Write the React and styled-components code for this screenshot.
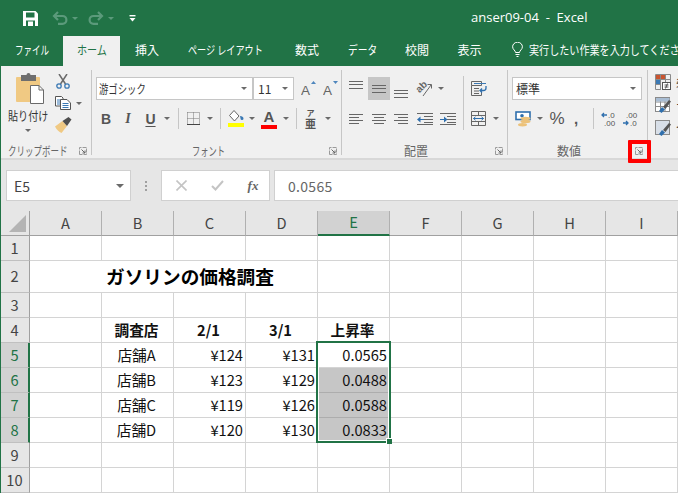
import React from 'react';
import styled, { createGlobalStyle } from 'styled-components';

const GREEN = '#217346';
const JP = `"Noto Sans CJK JP", "Noto Sans", sans-serif`;

const GlobalStyle = createGlobalStyle`
	html, body {
		margin: 0;
		padding: 0;
		background: #fff;
	}
	body {
		font-family: ${JP};
		overflow: hidden;
	}
`;

const Window = styled.div`
	width: 677px;
	height: 493px;
	overflow: hidden;
	border-left: 1px solid ${GREEN};
	position: relative;
`;

/* title bar */
const TitleBar = styled.header`
	height: 36px;
	background: ${GREEN};
	display: flex;
	align-items: center;
	padding-left: 22px;
	color: #fff;
`;

const Qat = styled.span`
	display: flex;
	align-items: center;
	margin-left: ${p => p.$ml || 0}px;
`;

const Title = styled.div`
	margin-left: 335px;
	font: 13px "Open Sans", sans-serif;
	white-space: pre;
	margin-top: -2px;
`;

/* tabs */
const TabBar = styled.nav`
	height: 30px;
	background: ${GREEN};
	display: flex;
	white-space: nowrap;
	overflow: hidden;
`;

const Tab = styled.div`
	width: ${p => p.$w}px;
	flex: none;
	display: flex;
	align-items: center;
	justify-content: center;
	font-size: 12px;
	padding-bottom: 3px;
	box-sizing: border-box;
	color: ${p => (p.$active ? GREEN : '#fff')};
	background: ${p => (p.$active ? '#f0f0f0' : 'transparent')};
`;

const TellMe = styled.div`
	margin-left: 16px;
	display: flex;
	align-items: center;
	color: #fff;
	font-size: 12px;
	padding-bottom: 3px;
	gap: 6px;
`;

/* squeezes Japanese text down to the narrow kana of the original UI font */
const Narrow = styled.span`
	display: inline-block;
	width: ${p => p.$w}px;
	white-space: nowrap;
	transform-origin: left center;
	transform: scaleX(${p => p.$s});
`;

/* ribbon */
const Ribbon = styled.section`
	height: 92px;
	background: #f0f0f0;
	border-bottom: 2px solid #d8d8d8;
	display: flex;
	position: relative;
	z-index: 3;
`;

const Group = styled.div`
	width: ${p => p.$w}px;
	height: 85px;
	margin-top: 4px;
	flex: none;
	box-sizing: border-box;
	border-right: ${p => (p.$last ? 'none' : '1px solid #c6c6c6')};
	display: flex;
	flex-direction: column;
`;

const GroupBody = styled.div`
	flex: 1;
	min-height: 0;
	display: flex;
`;

const GroupFoot = styled.div`
	height: 16px;
	margin-bottom: -4px;
	display: flex;
	align-items: center;
	color: #666;
`;

const GroupLabel = styled.div`
	flex: 1;
	text-align: center;
	font-size: 12px;
	line-height: 16px;
	white-space: nowrap;
`;

const Launcher = styled.div`
	width: 17px;
	height: 16px;
	flex: none;
	display: flex;
	align-items: center;
	justify-content: center;
	position: relative;
`;

const RedMark = styled.div`
	position: absolute;
	left: -2px;
	right: -4px;
	top: -3px;
	bottom: -4px;
	border: 4px solid #f00;
	border-radius: 1px;
`;

const Column = styled.div`
	display: flex;
	flex-direction: column;
	align-items: ${p => (p.$center ? 'center' : 'stretch')};
	padding-top: ${p => p.$top || 0}px;
	padding-left: ${p => p.$left || 0}px;
	width: ${p => (p.$w ? `${p.$w}px` : 'auto')};
	box-sizing: border-box;
	flex: none;
`;

const ToolRow = styled.div`
	display: flex;
	align-items: center;
	height: ${p => p.$h || 23}px;
	margin-top: ${p => p.$mt || 0}px;
	padding-left: ${p => p.$left || 0}px;
`;

const Tool = styled.div`
	width: ${p => p.$w}px;
	height: ${p => p.$h || 23}px;
	margin-left: ${p => p.$ml || 0}px;
	flex: none;
	display: flex;
	flex-direction: column;
	align-items: center;
	justify-content: center;
	color: #555;
	background: ${p => (p.$on ? '#c6c6c6' : 'transparent')};
`;

const Caret = styled.i`
	width: 0;
	height: 0;
	flex: none;
	margin-left: ${p => p.$ml ?? 1}px;
	margin-right: ${p => p.$mr ?? 1}px;
	margin-top: ${p => p.$mt || 0}px;
	border-left: ${p => p.$size || 3}px solid transparent;
	border-right: ${p => p.$size || 3}px solid transparent;
	border-top: ${p => p.$size || 3}px solid ${p => p.$c || '#6a6a6a'};
`;

const Rule = styled.div`
	width: 1px;
	height: ${p => p.$h || 21}px;
	margin-left: ${p => p.$ml || 0}px;
	margin-top: ${p => p.$mt || 0}px;
	background: #c6c6c6;
	flex: none;
`;

const Combo = styled.div`
	width: ${p => p.$w}px;
	height: 23px;
	box-sizing: border-box;
	background: #fff;
	border: 1px solid #c6c6c6;
	display: flex;
	align-items: center;
	justify-content: space-between;
	padding: 0 4px 0 2px;
	font-size: 12px;
	color: #333;
	flex: none;
`;

const ComboText = styled.span`
	padding-left: ${p => p.$pad || 0}px;
`;

const ToolGlyph = styled.span`
	font-family: ${p => (p.$serif ? '"Liberation Serif", serif' : '"Liberation Sans", sans-serif')};
	font-weight: ${p => (p.$light ? 400 : 700)};
	font-style: ${p => (p.$italic ? 'italic' : 'normal')};
	font-size: ${p => p.$size || 14}px;
	line-height: 1;
	color: ${p => p.$c || '#555'};
	text-decoration: ${p => (p.$under ? 'underline' : 'none')};
	text-underline-offset: 2px;
`;

const Swatch = styled.div`
	width: 16px;
	height: 4px;
	background: ${p => p.$c};
	margin-top: 1px;
`;

const Ruby = styled.span`
	font-size: 8px;
	line-height: 9px;
	font-weight: 700;
	color: #555;
`;

const RubyBase = styled.span`
	font-size: 11px;
	line-height: 13px;
	font-weight: 700;
	color: #555;
`;

const PasteLabel = styled.div`
	font-size: 12px;
	color: #333;
	line-height: 16px;
	margin-top: 4px;
	white-space: nowrap;
`;

const StyleRow = styled.div`
	display: flex;
	align-items: center;
	gap: 5px;
	height: 23px;
	white-space: nowrap;
	font-size: 12px;
	color: #333;
`;

/* formula bar */
const FormulaBar = styled.section`
	height: 51px;
	box-sizing: border-box;
	background: #e6e6e6;
	display: flex;
	padding: 10px 0 10px 5px;
`;

const FieldBox = styled.div`
	width: ${p => p.$w}px;
	margin-left: ${p => p.$ml || 0}px;
	flex: none;
	box-sizing: border-box;
	background: #fff;
	border: 1px solid #d0d0d0;
	display: flex;
	align-items: center;
	font-size: 14px;
	color: #555;
`;

const NameText = styled.span`
	flex: 1;
	padding-left: 7px;
	color: #444;
`;

const Dots = styled.div`
	width: 30px;
	flex: none;
	display: flex;
	flex-direction: column;
	align-items: center;
	justify-content: center;
	gap: 2px;
	i {
		width: 2px;
		height: 2px;
		background: #a0a0a0;
	}
`;

const FxButton = styled.span`
	width: ${p => p.$w}px;
	flex: none;
	display: flex;
	justify-content: center;
	font: italic 700 13px "Liberation Serif", serif;
	color: #666;
`;

const FormulaText = styled.span`
	padding-left: 13px;
	letter-spacing: 0.3px;
	color: #666;
`;

/* sheet */
const Sheet = styled.div`
	display: grid;
	position: relative;
	grid-template-columns: 29px repeat(9, 72px);
	grid-template-rows: 25px 25px 32px repeat(8, 25px);
	font-size: 14.67px;
	color: #111;
`;

const Corner = styled.div`
	background: #e6e6e6;
	border-right: 1px solid #a0a0a0;
	border-bottom: 1px solid #a0a0a0;
	display: flex;
	align-items: flex-end;
	justify-content: flex-end;
	padding: 0 3px 3px 0;
	box-sizing: border-box;
	&::after {
		content: '';
		width: 17px;
		height: 17px;
		background: #b4b4b4;
		clip-path: polygon(100% 0, 100% 100%, 0 100%);
	}
`;

const ColHead = styled.div`
	background: ${p => (p.$sel ? '#d2d2d2' : '#e6e6e6')};
	color: ${p => (p.$sel ? GREEN : '#444')};
	border-right: 1px solid #b0b0b0;
	border-bottom: ${p => (p.$sel ? `2px solid ${GREEN}` : '1px solid #a0a0a0')};
	box-sizing: border-box;
	display: flex;
	align-items: center;
	justify-content: center;
	padding-bottom: 2px;
`;

const RowHead = styled.div`
	background: ${p => (p.$sel ? '#d2d2d2' : '#e6e6e6')};
	color: ${p => (p.$sel ? GREEN : '#444')};
	border-right: ${p => (p.$sel ? `2px solid ${GREEN}` : '1px solid #a0a0a0')};
	border-bottom: 1px solid #c0c0c0;
	box-sizing: border-box;
	display: flex;
	align-items: center;
	justify-content: center;
	padding: 0 ${p => (p.$sel ? 0 : 1)}px 2px 0;
`;

const Cell = styled.div`
	box-sizing: border-box;
	border-right: 1px solid ${p => (p.$shade ? '#fff' : '#d4d4d4')};
	border-bottom: 1px solid ${p => (p.$shade ? '#adadad' : '#d4d4d4')};
	background: ${p => (p.$shade ? '#c6c6c6' : '#fff')};
	display: flex;
	align-items: center;
	justify-content: ${p => p.$align || 'flex-start'};
	padding: 0 2px 2px 0;
	font-weight: ${p => (p.$bold ? 700 : 400)};
	white-space: nowrap;
`;

const MergedTitle = styled(Cell)`
	grid-column: 2 / span 4;
	padding-left: 76px;
	font-size: 18.67px;
	font-weight: 700;
	color: #000;
`;

const Selection = styled.div`
	position: absolute;
	grid-column: 6 / span 1;
	grid-row: 6 / span 4;
	top: -2px;
	left: -2px;
	right: -1px;
	bottom: 0;
	border: 2px solid ${GREEN};
	box-shadow: inset 0 0 0 1px #fff;
	z-index: 2;
`;

const FillHandle = styled.div`
	position: absolute;
	right: -3px;
	bottom: -3px;
	width: 5px;
	height: 5px;
	background: ${GREEN};
	border: 1px solid #fff;
	border-right: 0;
	border-bottom: 0;
`;

/* icons */
const Svg = ({ w, h, children }) => (
	<svg width={w} height={h} viewBox={`0 0 ${w} ${h}`} fill="none" style={{ display: 'block', flex: 'none' }}>
		{children}
	</svg>
);

const LaunchIcon = () => (
	<Svg w={8} h={8}>
		<path d="M0.5 7.5V0.5H7.5V7.5Z" stroke="#9a9a9a" strokeDasharray="4 1" />
		<path d="M2.5 2.5L6 6M6 3.5V6H3.5" stroke="#666" />
	</Svg>
);

const SaveIcon = () => (
	<Svg w={15} h={15}>
		<path d="M0 0H12.5L15 2.5V15H0Z" fill="#fff" />
		<rect x="3" y="1.5" width="8.5" height="5" fill={GREEN} />
		<rect x="3" y="9.5" width="9" height="5.5" fill={GREEN} />
		<rect x="5" y="10.5" width="5" height="4.5" fill="#fff" />
	</Svg>
);

const UndoIcon = ({ flip }) => (
	<Svg w={16} h={14}>
		<g transform={flip ? 'translate(16 0) scale(-1 1)' : undefined} stroke="#5b9a7b" strokeWidth="2.2">
			<path d="M6 1L2 5L6 9" />
			<path d="M2 5H10.5A3.8 3.8 0 0 1 10.5 12.8H6" />
		</g>
	</Svg>
);

const CustomizeIcon = () => (
	<Svg w={7} h={7}>
		<rect x="0.5" y="0" width="6" height="1.4" fill="#fff" />
		<path d="M0.5 3H6.5L3.5 6.5Z" fill="#fff" />
	</Svg>
);

const BulbIcon = () => (
	<Svg w={11} h={15}>
		<path d="M3.5 10.5C3.5 8.5 0.6 7.5 0.6 4.8A4.9 4.6 0 0 1 10.4 4.8C10.4 7.5 7.5 8.5 7.5 10.5Z" stroke="#fff" />
		<path d="M3.5 12.5H7.5M4.5 14.5H6.5" stroke="#fff" />
	</Svg>
);

const PasteIcon = () => (
	<Svg w={32} h={31}>
		<g transform="translate(4 0)">
			<rect x="0" y="4" width="24" height="25" rx="1" fill="#f0c983" />
			<rect x="5" y="2" width="15" height="6" fill="#6e6e6e" />
			<circle cx="12.5" cy="2" r="2" fill="#6e6e6e" />
			<path d="M14.5 12.5H23L27.5 17V30.5H14.5Z" fill="#fff" stroke="#6a6a6a" />
			<path d="M23 12.5V17H27.5" stroke="#6a6a6a" />
		</g>
	</Svg>
);

const ScissorsIcon = () => (
	<Svg w={14} h={15}>
		<path d="M3 0L9.5 10M11 0L4.5 10" stroke="#6a6a6a" strokeWidth="1.5" />
		<circle cx="3" cy="12" r="2.2" stroke="#3b79b4" strokeWidth="1.3" />
		<circle cx="11" cy="12" r="2.2" stroke="#3b79b4" strokeWidth="1.3" />
	</Svg>
);

const CopyIcon = () => (
	<Svg w={16} h={14}>
		<path d="M0.5 0.5H6.5L8 2V10H0.5Z" fill="#fff" stroke="#555" />
		<path d="M2 4H6M2 6H5M2 8H5" stroke="#3b79b4" />
		<path d="M5.5 3.5H12L15.5 7V13.5H5.5Z" fill="#fff" stroke="#555" />
		<path d="M7.5 7.5H13.5M7.5 9.5H13.5M7.5 11.5H13.5" stroke="#3b79b4" />
	</Svg>
);

const BrushIcon = () => (
	<Svg w={17} h={16}>
		<path d="M0 9.5L7.5 4L12 9L6.5 16C4 15 1.5 12.5 0 9.5Z" fill="#f0c983" />
		<path d="M7.5 4L13.5 0L16.5 2.5L12 9Z" fill="#4f4f4f" />
	</Svg>
);

const GrowIcon = ({ down }) => (
	<Svg w={15} h={18}>
		<path d={down ? 'M10 1H15L12.5 4Z' : 'M10 4H15L12.5 1Z'} fill="#4e86bd" />
		<text x="0" y="14.5" fontFamily="Liberation Sans, sans-serif" fontSize="13.5" fill="#666">A</text>
	</Svg>
);

const BordersIcon = () => (
	<Svg w={13} h={13}>
		<path d="M0.5 0.5H12.5V12.5M0.5 0.5V12.5M6.5 0.5V12.5M0.5 6.5H12.5" stroke="#777" strokeDasharray="1 1" />
		<path d="M0 12.5H13" stroke="#444" />
	</Svg>
);

const BucketIcon = () => (
	<Svg w={16} h={12}>
		<path d="M6 0.5L1.5 5.5L6.5 11L11 6Z" fill="#fff" stroke="#666" />
		<path d="M12 6C14 6 15.5 7 15.5 8.5A1.5 1.5 0 0 1 12.5 8.5Z" fill="#3b79b4" />
	</Svg>
);

const Lines = ({ h, rows }) => (
	<Svg w={16} h={h}>
		{rows.map(([x1, y, x2]) => (
			<path key={y} d={`M${x1} ${y}H${x2}`} stroke="#666" />
		))}
	</Svg>
);

const OrientIcon = () => (
	<Svg w={18} h={18}>
		<text x="1" y="11" transform="rotate(-45 5 9)" fontFamily="Liberation Sans, sans-serif" fontSize="10" fontWeight="700" fill="#666">ab</text>
		<path d="M7 16L15 5M11.5 4.5H15.5V8.5" stroke="#666" />
	</Svg>
);

const IndentIcon = ({ right }) => (
	<Svg w={16} h={12}>
		<path d="M0 0.5H16M7 3.5H16M7 6.5H16M7 9.5H16M0 11.5H16" stroke="#666" />
		{right
			? <path d="M0 6H4V3.5L7.5 6.5L4 9.5V7H0Z" fill="#2f6fad" />
			: <path d="M7 6H3.5V3.5L0 6.5L3.5 9.5V7H7Z" fill="#2f6fad" />}
	</Svg>
);

const WrapIcon = () => (
	<Svg w={16} h={15}>
		<path d="M0.5 0.5H10.5V4.5H0.5ZM0.5 4.5V14.5H10.5V11" stroke="#666" />
		<path d="M3 7.5H8M3 10H8M3 12.5H8" stroke="#666" />
		<path d="M3 2.5H15" stroke="#3b79b4" />
		<path d="M15 5V7A2.5 2.5 0 0 1 12.5 9.5H9M11 7.5L9 9.5L11 11.5" stroke="#2f6fad" strokeWidth="1.3" />
	</Svg>
);

const MergeIcon = () => (
	<Svg w={15} h={15}>
		<path d="M0.5 0.5H14.5V14.5H0.5ZM0.5 4.5H14.5M0.5 10.5H14.5M7.5 0.5V4.5M7.5 10.5V14.5" stroke="#666" />
		<path d="M2.5 7.5H12.5M4.5 5.8L2.5 7.5L4.5 9.2M10.5 5.8L12.5 7.5L10.5 9.2" stroke="#2f6fad" />
	</Svg>
);

const CurrencyIcon = () => (
	<Svg w={17} h={16}>
		<rect x="1" y="1" width="14" height="7.5" stroke="#2f6fad" strokeWidth="1.6" fill="#fff" />
		<circle cx="7" cy="4.8" r="1.8" fill="#2f6fad" />
		<ellipse cx="10.5" cy="7.5" rx="5" ry="1.7" fill="#ecc27a" />
		<ellipse cx="10.5" cy="10.5" rx="5" ry="1.7" fill="#ecc27a" />
		<ellipse cx="7.5" cy="13.8" rx="4.5" ry="1.7" fill="#ecc27a" />
	</Svg>
);

const DecimalIcon = ({ more }) => (
	<Svg w={15} h={16}>
		<text x={more ? 7 : 3} y="7" fontFamily="Liberation Sans, sans-serif" fontSize="8" fill="#555">{more ? '.0' : '.00'}</text>
		<text x={more ? 3 : 7} y="15" fontFamily="Liberation Sans, sans-serif" fontSize="8" fill="#555">{more ? '.00' : '.0'}</text>
		{more
			? <path d="M6 4H1M3 2L1 4L3 6" stroke="#2f6fad" strokeWidth="1.3" />
			: <path d="M0 12H5M3 10L5 12L3 14" stroke="#2f6fad" strokeWidth="1.3" />}
	</Svg>
);

const CondFormatIcon = () => (
	<Svg w={16} h={16}>
		<path d="M0.5 0.5H15.5V10M0.5 0.5V15.5H6M5.5 0.5V15.5M10.5 0.5V8M0.5 5.5H15.5M0.5 10.5H6" stroke="#8a8a8a" />
		<rect x="1" y="1" width="4" height="4" fill="#c9542f" />
		<rect x="6" y="1" width="4" height="4" fill="#c9542f" />
		<rect x="1" y="6" width="4" height="4" fill="#3b79b4" />
		<rect x="7.5" y="8.5" width="8" height="7" fill="#fff" stroke="#555" />
		<path d="M9.5 11H13.5M9.5 13H13.5M12.5 9.5L10.5 14.5" stroke="#333" strokeWidth="0.8" />
	</Svg>
);

const TableBrushIcon = ({ plain }) => (
	<Svg w={16} h={16}>
		<rect x="0.5" y="0.5" width="14" height="14" fill={plain ? '#d8dfe8' : '#fff'} stroke="#8a8a8a" />
		{!plain && <path d="M5.5 0.5V14.5M10 0.5V14.5M0.5 5H14.5M0.5 9.5H14.5" stroke="#8a8a8a" />}
		{!plain && <rect x="1" y="1" width="13.5" height="3.5" fill="#a9bdd3" />}
		<path d="M4 14L7 10L10 12.5L6.5 16Z" fill="#2f6fad" />
		<path d="M8 10L14 3L16 4.5L10.5 12Z" fill="#555" />
	</Svg>
);

const CrossIcon = () => (
	<Svg w={11} h={11}>
		<path d="M0.5 0.5L10.5 10.5M10.5 0.5L0.5 10.5" stroke="#c4c4c4" strokeWidth="1.6" />
	</Svg>
);

const CheckIcon = () => (
	<Svg w={13} h={11}>
		<path d="M1 6L4.5 9.5L12 1" stroke="#c4c4c4" strokeWidth="2" />
	</Svg>
);

const LaunchCell = ({ marked }) => (
	<Launcher>
		<LaunchIcon />
		{marked && <RedMark />}
	</Launcher>
);

const columns = ['A', 'B', 'C', 'D', 'E', 'F', 'G', 'H', 'I'];
const stores = [
	['店舗A', '¥124', '¥131', '0.0565'],
	['店舗B', '¥123', '¥129', '0.0488'],
	['店舗C', '¥119', '¥126', '0.0588'],
	['店舗D', '¥120', '¥130', '0.0833']
];

const EmptyRow = () => columns.map(c => <Cell key={c} />);

const SheetRow = ({ n, sel, children }) => (
	<React.Fragment>
		<RowHead $sel={sel}>{n}</RowHead>
		{children}
	</React.Fragment>
);

const App = () => (
	<Window>
		<GlobalStyle />
		<TitleBar>
			<SaveIcon />
			<Qat $ml={14}><UndoIcon /><Caret $ml={4} $c="#5b9a7b" /></Qat>
			<Qat $ml={9}><UndoIcon flip /><Caret $ml={4} $c="#5b9a7b" /></Qat>
			<Qat $ml={14}><CustomizeIcon /></Qat>
			<Title>anser09-04  -  Excel</Title>
		</TitleBar>

		<TabBar>
			<Tab $w={62}><Narrow $w={34} $s={0.71}>ファイル</Narrow></Tab>
			<Tab $w={57} $active><Narrow $w={30} $s={0.84}>ホーム</Narrow></Tab>
			<Tab $w={54}>挿入</Tab>
			<Tab $w={107}><Narrow $w={80} $s={0.76}>ページ レイアウト</Narrow></Tab>
			<Tab $w={52}>数式</Tab>
			<Tab $w={58}><Narrow $w={29} $s={0.81}>データ</Narrow></Tab>
			<Tab $w={52}>校閲</Tab>
			<Tab $w={53}>表示</Tab>
			<TellMe><BulbIcon /><Narrow $w={150} $s={0.84}>実行したい作業を入力してください</Narrow></TellMe>
		</TabBar>

		<Ribbon>
			<Group $w={91}>
				<GroupBody>
					<Column $w={54} $top={3} $center>
						<PasteIcon />
						<PasteLabel><Narrow $w={40} $s={0.84}>貼り付け</Narrow></PasteLabel>
						<Caret $ml={0} $mr={0} $mt={5} />
					</Column>
					<Column>
						<ToolRow $h={22} $left={1}><ScissorsIcon /></ToolRow>
						<ToolRow $h={22}><CopyIcon /><Caret $ml={5} /></ToolRow>
						<ToolRow $h={22}><BrushIcon /></ToolRow>
					</Column>
				</GroupBody>
				<GroupFoot>
					<GroupLabel><Narrow $w={60} $s={0.71}>クリップボード</Narrow></GroupLabel>
					<LaunchCell />
				</GroupFoot>
			</Group>

			<Group $w={250}>
				<GroupBody>
					<Column $top={7}>
						<ToolRow $left={4}>
							<Combo $w={157}><Narrow $w={47} $s={0.78}>游ゴシック</Narrow><Caret /></Combo>
							<Combo $w={41}>
								<ComboText $pad={2}>11</ComboText><Caret />
							</Combo>
							<Tool $w={23} $ml={3}><GrowIcon /></Tool>
							<Tool $w={21}><GrowIcon down /></Tool>
						</ToolRow>
						<ToolRow $left={3} $mt={7}>
							<Tool $w={22}><ToolGlyph>B</ToolGlyph></Tool>
							<Tool $w={22}><ToolGlyph $serif $italic>I</ToolGlyph></Tool>
							<Tool $w={23}><ToolGlyph $under>U</ToolGlyph></Tool>
							<Caret $ml={2} $mr={2} />
							<Rule $ml={6} />
							<Tool $w={25} $ml={2}><BordersIcon /></Tool>
							<Caret />
							<Rule $ml={6} />
							<Tool $w={24} $ml={3}><BucketIcon /><Swatch $c="#ffff00" /></Tool>
							<Caret />
							<Tool $w={26}><ToolGlyph $size={15}>A</ToolGlyph><Swatch $c="#ff0000" /></Tool>
							<Caret />
							<Rule $ml={6} />
							<Tool $w={27}><Ruby>ア</Ruby><RubyBase>亜</RubyBase></Tool>
							<Caret />
						</ToolRow>
					</Column>
				</GroupBody>
				<GroupFoot>
					<GroupLabel><Narrow $w={33} $s={0.69}>フォント</Narrow></GroupLabel>
					<LaunchCell />
				</GroupFoot>
			</Group>

			<Group $w={166}>
				<GroupBody>
					<Column $top={7} $left={4} $w={121}>
						<ToolRow>
							<Tool $w={22}><Lines h={18} rows={[[0, 1.5, 14], [0, 4.5, 14], [0, 8.5, 14]]} /></Tool>
							<Tool $w={22} $on><Lines h={18} rows={[[1, 5.5, 15], [1, 8.5, 15], [1, 12.5, 15]]} /></Tool>
							<Tool $w={22}><Lines h={18} rows={[[1, 10.5, 15], [1, 13.5, 15], [1, 17.5, 15]]} /></Tool>
							<Tool $w={26}><OrientIcon /></Tool>
							<Caret $ml={0} $mr={0} />
						</ToolRow>
						<ToolRow $mt={7}>
							<Tool $w={22}><Lines h={12} rows={[[0, 1.5, 14], [0, 4.5, 10], [0, 7.5, 14], [0, 10.5, 10]]} /></Tool>
							<Tool $w={22}><Lines h={12} rows={[[1, 1.5, 15], [3, 4.5, 13], [1, 7.5, 15], [3, 10.5, 13]]} /></Tool>
							<Tool $w={22}><Lines h={12} rows={[[1, 1.5, 15], [5, 4.5, 15], [1, 7.5, 15], [5, 10.5, 15]]} /></Tool>
							<Tool $w={26}><IndentIcon /></Tool>
							<Tool $w={20}><IndentIcon right /></Tool>
						</ToolRow>
					</Column>
					<Rule $h={54} $mt={6} />
					<Column $top={7}>
						<ToolRow><Tool $w={30}><WrapIcon /></Tool></ToolRow>
						<ToolRow $mt={7}><Tool $w={28}><MergeIcon /></Tool><Caret /></ToolRow>
					</Column>
				</GroupBody>
				<GroupFoot>
					<GroupLabel>配置</GroupLabel>
					<LaunchCell />
				</GroupFoot>
			</Group>

			<Group $w={140}>
				<GroupBody>
					<Column $top={7} $left={4}>
						<ToolRow>
							<Combo $w={130}><ComboText $pad={1}>標準</ComboText><Caret /></Combo>
						</ToolRow>
						<ToolRow $mt={7}>
							<Tool $w={23}><CurrencyIcon /></Tool>
							<Caret $ml={2} />
							<Tool $w={20} $ml={3}><ToolGlyph $size={17} $light>%</ToolGlyph></Tool>
							<Tool $w={18}><ToolGlyph $size={15}>,</ToolGlyph></Tool>
							<Rule $ml={8} />
							<Tool $w={22} $ml={3}><DecimalIcon more /></Tool>
							<Tool $w={22}><DecimalIcon /></Tool>
						</ToolRow>
					</Column>
				</GroupBody>
				<GroupFoot>
					<GroupLabel>数値</GroupLabel>
					<LaunchCell marked />
				</GroupFoot>
			</Group>

			<Group $w={30} $last>
				<GroupBody>
					<Column $left={7}>
						<StyleRow><CondFormatIcon />条件付き書式</StyleRow>
						<StyleRow><TableBrushIcon />テーブルとして書式設定</StyleRow>
						<StyleRow><TableBrushIcon plain />セルのスタイル</StyleRow>
					</Column>
				</GroupBody>
			</Group>
		</Ribbon>

		<FormulaBar>
			<FieldBox $w={125}>
				<NameText>E5</NameText>
				<Caret $ml={0} $mr={6} $size={4} />
			</FieldBox>
			<Dots><i /><i /><i /></Dots>
			<FieldBox $w={109}>
				<FxButton $w={38}><CrossIcon /></FxButton>
				<FxButton $w={34}><CheckIcon /></FxButton>
				<FxButton $w={38}>fx</FxButton>
			</FieldBox>
			<FieldBox $w={420} $ml={4}>
				<FormulaText>0.0565</FormulaText>
			</FieldBox>
		</FormulaBar>

		<Sheet>
			<Corner />
			{columns.map(c => <ColHead key={c} $sel={c === 'E'}>{c}</ColHead>)}

			<SheetRow n={1}><EmptyRow /></SheetRow>

			<SheetRow n={2}>
				<MergedTitle>ガソリンの価格調査</MergedTitle>
				{columns.slice(4).map(c => <Cell key={c} />)}
			</SheetRow>

			<SheetRow n={3}><EmptyRow /></SheetRow>

			<SheetRow n={4}>
				<Cell />
				{['調査店', '2/1', '3/1', '上昇率'].map(t => (
					<Cell key={t} $bold $align="center">{t}</Cell>
				))}
				{columns.slice(5).map(c => <Cell key={c} />)}
			</SheetRow>

			{stores.map(([name, feb, mar, rate], i) => (
				<SheetRow key={name} n={5 + i} sel>
					<Cell />
					<Cell $align="center">{name}</Cell>
					<Cell $align="flex-end">{feb}</Cell>
					<Cell $align="flex-end">{mar}</Cell>
					<Cell $align="flex-end" $shade={i > 0}>{rate}</Cell>
					{columns.slice(5).map(c => <Cell key={c} />)}
				</SheetRow>
			))}

			<SheetRow n={9}><EmptyRow /></SheetRow>
			<SheetRow n={10}><EmptyRow /></SheetRow>

			<Selection><FillHandle /></Selection>
		</Sheet>
	</Window>
);

export default App;
